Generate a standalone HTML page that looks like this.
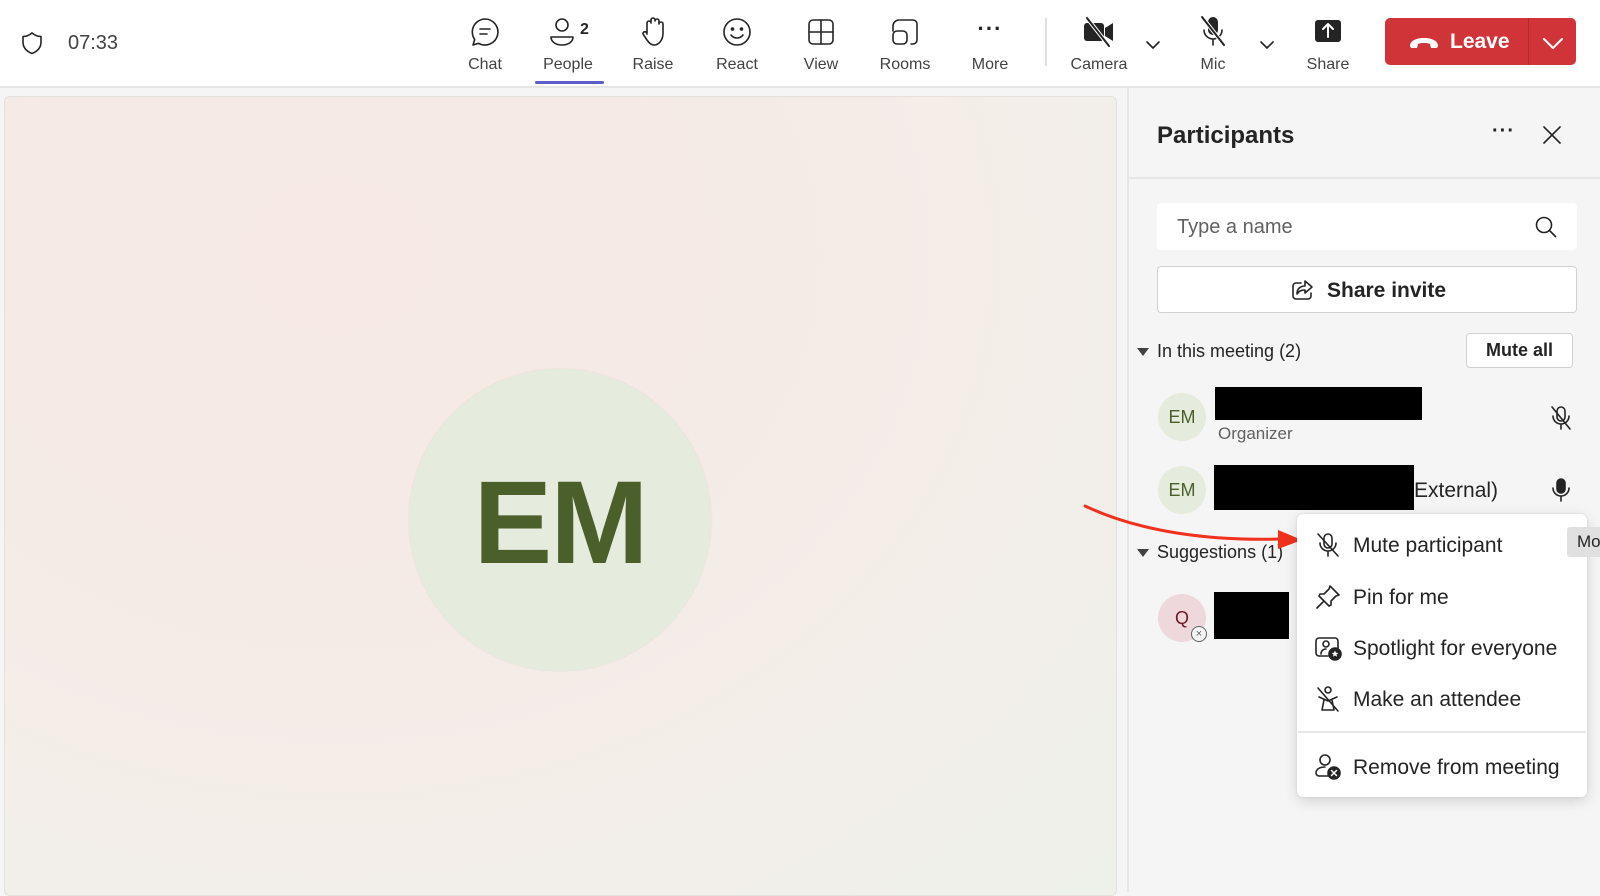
<!DOCTYPE html>
<html><head><meta charset="utf-8"><style>
*{margin:0;padding:0;box-sizing:border-box}
body{width:1600px;height:892px;overflow:hidden;background:#f5f5f5;font-family:"Liberation Sans",sans-serif;color:#242424;position:relative}
.a{position:absolute}
.top{left:0;top:0;width:1600px;height:88px;background:#fff;border-bottom:2px solid #e6e6e6}
.lbl{font-size:16px;color:#424242;transform:translateX(-50%);top:56px;white-space:nowrap}
.ic{transform:translate(-50%,-50%)}
svg{fill:none;stroke:#242424;stroke-width:1.6;stroke-linecap:round;stroke-linejoin:round}
.mi{font-size:21px;color:#242424;left:1353px;transform:translateY(-50%)}
.mic{left:1328px;transform:translate(-50%,-50%)}
</style></head><body>
<div class="a top"></div>
<svg class="a" style="left:21px;top:31px" width="22" height="24" viewBox="0 0 22 24"><path d="M11 2 C8 4.5 5 5.5 2 5.5 V11 C2 17 6 20.5 11 22.5 C16 20.5 20 17 20 11 V5.5 C17 5.5 14 4.5 11 2Z"/></svg>
<div class="a" style="left:68px;top:32px;font-size:20px;color:#424242">07:33</div>

<svg class="a ic" style="left:485px;top:32px" width="32" height="32" viewBox="0 0 32 32"><path d="M16 3a13 13 0 1 1-6.5 24.3L4 29l1.7-5.5A13 13 0 0 1 16 3Z"/><path d="M11 13h10M11 18h7"/></svg>
<div class="a lbl" style="left:485px">Chat</div>
<svg class="a ic" style="left:562px;top:32px" width="30" height="32" viewBox="0 0 30 32"><circle cx="15" cy="9" r="6"/><path d="M4 21h22a2 2 0 0 1 0 0c0 5-5 8-11 8S4 26 4 21Z"/></svg>
<div class="a" style="left:580px;top:21px;font-size:16px;font-weight:bold">2</div>
<div class="a lbl" style="left:568px">People</div>
<div class="a" style="left:535px;top:81px;width:69px;height:3px;border-radius:2px;background:#5b5fc7"></div>
<svg class="a ic" style="left:653px;top:32px" width="30" height="34" viewBox="0 0 30 34"><path d="M9 18V8a2 2 0 0 1 4 0V5a2 2 0 0 1 4 0v1a2 2 0 0 1 4 0v3a2 2 0 0 1 4 0v9c0 7-4 12-9 12-3 0-5-2-7-5l-4-6a2 2 0 0 1 3-2l1 2"/></svg>
<div class="a lbl" style="left:653px">Raise</div>
<svg class="a ic" style="left:737px;top:32px" width="32" height="32" viewBox="0 0 32 32"><circle cx="16" cy="16" r="13"/><circle cx="11.5" cy="13" r="1" fill="#242424"/><circle cx="20.5" cy="13" r="1" fill="#242424"/><path d="M10 19c3 4 9 4 12 0"/></svg>
<div class="a lbl" style="left:737px">React</div>
<svg class="a ic" style="left:821px;top:32px" width="30" height="30" viewBox="0 0 30 30"><rect x="3" y="3" width="24" height="24" rx="4"/><path d="M15 3v24M3 15h24"/></svg>
<div class="a lbl" style="left:821px">View</div>
<svg class="a ic" style="left:905px;top:32px" width="30" height="30" viewBox="0 0 30 30"><path d="M10 3h13a4 4 0 0 1 4 4v16a4 4 0 0 1-4 4h-2"/><rect x="3" y="14" width="14" height="13" rx="4"/><path d="M3 14V9a6 6 0 0 1 6-6"/></svg>
<div class="a lbl" style="left:905px">Rooms</div>
<div class="a" style="left:990px;top:16px;transform:translateX(-50%);font-size:22px;font-weight:bold;letter-spacing:1px">···</div>
<div class="a lbl" style="left:990px">More</div>
<div class="a" style="left:1045px;top:18px;width:2px;height:48px;background:#e0e0e0"></div>

<svg class="a ic" style="left:1099px;top:32px" width="36" height="32" viewBox="0 0 36 32"><rect x="3" y="7" width="20" height="18" rx="3" fill="#242424" stroke="none"/><path d="M24 12l8-5v18l-8-5Z" fill="#242424" stroke="none"/><path d="M6 2l22 28" stroke="#fff" stroke-width="4"/><path d="M6 2l22 28" stroke-width="2"/></svg>
<div class="a lbl" style="left:1099px">Camera</div>
<svg class="a ic" style="left:1153px;top:45px" width="16" height="10" viewBox="0 0 16 10"><path d="M2 2l6 6 6-6"/></svg>
<svg class="a ic" style="left:1213px;top:32px" width="32" height="34" viewBox="0 0 32 34"><rect x="11" y="2" width="10" height="18" rx="5" fill="#242424" stroke="none"/><path d="M7 15a9 9 0 0 0 18 0M16 24v6"/><path d="M5 2l22 28" stroke="#fff" stroke-width="4"/><path d="M5 2l22 28" stroke-width="2"/></svg>
<div class="a lbl" style="left:1213px">Mic</div>
<svg class="a ic" style="left:1267px;top:45px" width="16" height="10" viewBox="0 0 16 10"><path d="M2 2l6 6 6-6"/></svg>
<svg class="a ic" style="left:1328px;top:31px" width="32" height="28" viewBox="0 0 32 28"><rect x="3" y="3" width="26" height="22" rx="3" fill="#242424" stroke="none"/><path d="M16 20V8M11 12l5-5 5 5" stroke="#fff" stroke-width="2"/></svg>
<div class="a lbl" style="left:1328px">Share</div>

<div class="a" style="left:1385px;top:18px;width:191px;height:47px;background:#d13438;border-radius:5px"></div>
<div class="a" style="left:1528px;top:18px;width:1px;height:47px;background:#b02a2e"></div>
<svg class="a" style="left:1408px;top:35px" width="32" height="16" viewBox="0 0 32 16"><path d="M2 11c0-5 6-8 14-8s14 3 14 8l-1 2h-6l-1-4c-2-1-4-1-6-1s-4 0-6 1l-1 4H3Z" fill="#fff" stroke="none"/></svg>
<div class="a" style="left:1450px;top:30px;font-size:21px;font-weight:bold;color:#fff">Leave</div>
<svg class="a" style="left:1542px;top:37px" width="22" height="14" viewBox="0 0 22 14"><path d="M2 2l9 9 9-9" stroke="#fff" stroke-width="2"/></svg>

<div class="a" style="left:4px;top:96px;width:1113px;height:800px;border-radius:6px;border:1px solid #e4e0dc;background:radial-gradient(ellipse at 30% 20%,#f7e9e4 0%,#f5ebe6 40%,#f2efea 75%,#eef0ea 100%)"></div>
<div class="a" style="left:409px;top:369px;width:302px;height:302px;border-radius:50%;background:#e5ebdd;box-shadow:0 0 2px rgba(0,0,0,.08)"></div>
<div class="a" style="left:409px;top:458px;width:302px;text-align:center;font-size:118px;font-weight:bold;color:#4b5f2b;line-height:130px;letter-spacing:-2px">EM</div>

<div class="a" style="left:1127px;top:88px;width:2px;height:804px;background:#e6e6e6"></div>
<div class="a" style="left:1157px;top:122px;font-size:24px;font-weight:bold">Participants</div>
<div class="a" style="left:1492px;top:120px;font-size:20px;font-weight:bold;letter-spacing:1px">···</div>
<svg class="a" style="left:1542px;top:125px" width="20" height="20" viewBox="0 0 20 20"><path d="M2 2l16 16M18 2L2 18"/></svg>
<div class="a" style="left:1129px;top:177px;width:471px;height:2px;background:#e6e6e6"></div>

<div class="a" style="left:1157px;top:203px;width:420px;height:47px;background:#fff;border-radius:4px"></div>
<div class="a" style="left:1177px;top:216px;font-size:20px;color:#616161">Type a name</div>
<svg class="a" style="left:1534px;top:215px" width="24" height="24" viewBox="0 0 24 24"><circle cx="10" cy="10" r="7.5"/><path d="M15.5 15.5l6 6"/></svg>
<div class="a" style="left:1157px;top:266px;width:420px;height:47px;background:#fff;border:1px solid #d1d1d1;border-radius:4px"></div>
<svg class="a" style="left:1291px;top:279px" width="24" height="22" viewBox="0 0 24 22"><path d="M10 4H5a3 3 0 0 0-3 3v10a3 3 0 0 0 3 3h12a3 3 0 0 0 3-3v-3"/><path d="M14 2l7 6-7 6v-3c-4 0-6 1-8 4 0-5 3-8 8-8Z"/></svg>
<div class="a" style="left:1327px;top:279px;font-size:21px;font-weight:bold">Share invite</div>

<svg class="a" style="left:1136px;top:347px" width="14" height="10"><path d="M1 1h12L7 9Z" fill="#424242" stroke="none"/></svg>
<div class="a" style="left:1157px;top:341px;font-size:18px;color:#242424">In this meeting (2)</div>
<div class="a" style="left:1466px;top:333px;width:107px;height:35px;background:#fff;border:1px solid #d1d1d1;border-radius:4px;text-align:center;line-height:33px;font-size:18px;font-weight:bold">Mute all</div>

<div class="a" style="left:1158px;top:393px;width:48px;height:48px;border-radius:50%;background:#e5ebdd;text-align:center;line-height:48px;font-size:18px;color:#4b5f2b">EM</div>
<div class="a" style="left:1215px;top:387px;width:207px;height:33px;background:#000"></div>
<div class="a" style="left:1218px;top:424px;font-size:17px;color:#616161">Organizer</div>
<svg class="a" style="left:1549px;top:405px" width="24" height="26" viewBox="0 0 24 26"><rect x="8" y="2" width="8" height="14" rx="4"/><path d="M4 11a8 8 0 0 0 16 0M12 19v5M3 2l18 22"/></svg>

<div class="a" style="left:1158px;top:466px;width:48px;height:48px;border-radius:50%;background:#e5ebdd;text-align:center;line-height:48px;font-size:18px;color:#4b5f2b">EM</div>
<div class="a" style="left:1214px;top:465px;width:200px;height:45px;background:#000"></div>
<div class="a" style="left:1414px;top:479px;font-size:21px">External)</div>
<svg class="a" style="left:1549px;top:477px" width="24" height="26" viewBox="0 0 24 26"><rect x="8" y="2" width="8" height="14" rx="4" fill="#242424"/><path d="M4 11a8 8 0 0 0 16 0M12 19v5"/></svg>

<svg class="a" style="left:1136px;top:548px" width="14" height="10"><path d="M1 1h12L7 9Z" fill="#424242" stroke="none"/></svg>
<div class="a" style="left:1157px;top:542px;font-size:18px">Suggestions (1)</div>
<div class="a" style="left:1158px;top:594px;width:48px;height:48px;border-radius:50%;background:#eed8dc;text-align:center;line-height:48px;font-size:18px;color:#6b1a26">Q</div>
<div class="a" style="left:1191px;top:626px;width:16px;height:16px;border-radius:50%;background:#f5f5f5;border:1px solid #616161;font-size:11px;line-height:14px;text-align:center;color:#616161">×</div>
<div class="a" style="left:1214px;top:592px;width:75px;height:47px;background:#000"></div>

<svg class="a" style="left:1080px;top:500px" width="230" height="50" viewBox="1080 500 230 50"><path d="M1085 506C1140 532 1210 541 1280 539" stroke="#f0311e" stroke-width="3"/><path d="M1278 530L1302 540 1278 549Z" fill="#f0311e" stroke="none"/></svg>

<div class="a" style="left:1297px;top:514px;width:290px;height:283px;background:#fff;border-radius:6px;box-shadow:0 4px 14px rgba(0,0,0,.14),0 0 2px rgba(0,0,0,.12)"></div>
<div class="a" style="left:1567px;top:527px;width:40px;height:30px;background:#e0e0e0;border-radius:3px;font-size:17px;line-height:30px;padding-left:10px;color:#242424">Mo</div>
<svg class="a mic" style="top:545px" width="26" height="26" viewBox="0 0 26 26"><rect x="9" y="2" width="8" height="14" rx="4"/><path d="M5 11a8 8 0 0 0 16 0M13 19v5M3 2l20 22"/></svg>
<div class="a mi" style="top:546px">Mute participant</div>
<svg class="a mic" style="top:597px" width="26" height="26" viewBox="0 0 26 26"><path d="M15 2l9 9-3 1-5 5 0 4-2 1-10-10 1-2h4l5-5Z M8 18l-6 6"/></svg>
<div class="a mi" style="top:598px">Pin for me</div>
<svg class="a mic" style="top:648px" width="28" height="26" viewBox="0 0 28 26"><path d="M14 21H5a3 3 0 0 1-3-3V6a3 3 0 0 1 3-3h16a3 3 0 0 1 3 3v7"/><circle cx="12" cy="9" r="3"/><path d="M7 19c0-3 2-5 5-5"/><circle cx="21" cy="19" r="6" fill="#242424"/><path d="M21 15.5l1 2.3 2.3.2-1.8 1.5.6 2.3-2.1-1.3-2.1 1.3.6-2.3-1.8-1.5 2.3-.2Z" fill="#fff" stroke="none"/></svg>
<div class="a mi" style="top:649px">Spotlight for everyone</div>
<svg class="a mic" style="top:699px" width="26" height="28" viewBox="0 0 26 28"><circle cx="13" cy="5" r="3"/><path d="M4 12l9 4 9-4M9 15l-2 10h12l-2-10M3 3l20 23"/></svg>
<div class="a mi" style="top:700px">Make an attendee</div>
<div class="a" style="left:1298px;top:731px;width:288px;height:2px;background:#e8e8e8"></div>
<svg class="a mic" style="top:767px" width="28" height="28" viewBox="0 0 28 28"><circle cx="11" cy="7" r="5"/><path d="M14 23H5a3 3 0 0 1-3-3c0-4 4-6 9-6"/><circle cx="20" cy="20" r="6" fill="#242424"/><path d="M17.5 17.5l5 5M22.5 17.5l-5 5" stroke="#fff" stroke-width="1.5"/></svg>
<div class="a mi" style="top:768px">Remove from meeting</div>
</body></html>
